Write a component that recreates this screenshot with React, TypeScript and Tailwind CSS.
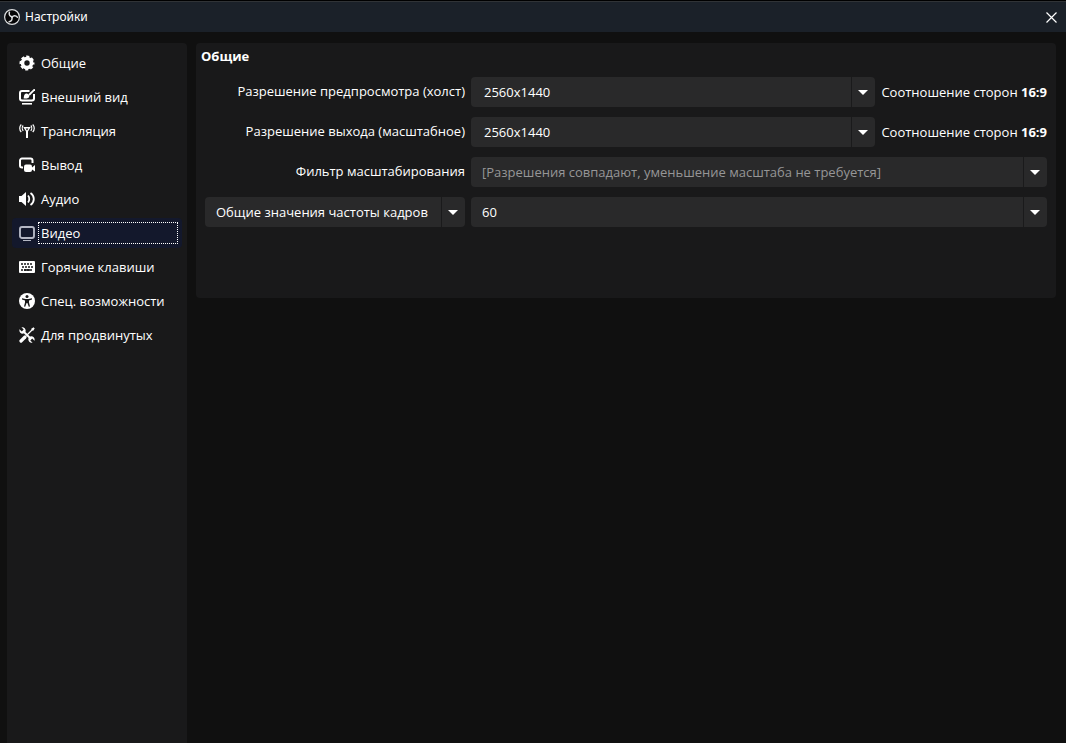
import React, { useState } from 'react';

const iconClass = 'h-4 w-4 shrink-0';

const ObsLogo = () => (
  <svg viewBox="0 0 16 16" className={iconClass} fill="none" stroke="#dcdee0">
    <circle cx="8" cy="8" r="7.400" fill="#050506" strokeWidth="1.200" />
    <g strokeWidth="1.500" strokeLinecap="round">
      <path d="M8.200 7.800C6 7.600 4.600 5.800 5.400 3.200" />
      <path d="M8.200 7.800C6 7.600 4.600 5.800 5.400 3.200" transform="rotate(120 8 8)" />
      <path d="M8.200 7.800C6 7.600 4.600 5.800 5.400 3.200" transform="rotate(240 8 8)" />
    </g>
  </svg>
);

const GearIcon = () => (
  <svg viewBox="0 0 16 16" className={iconClass} fill="none" stroke="currentColor">
    <circle cx="8" cy="8" r="4.500" strokeWidth="3.600" />
    <circle cx="8" cy="8" r="6.500" strokeWidth="2" strokeDasharray="3.105 2" strokeDashoffset="1.550" />
  </svg>
);

const AppearanceIcon = () => (
  <svg viewBox="0 0 16 16" className={iconClass} fill="none" stroke="currentColor" strokeWidth="2">
    <path d="M10.500 2H3a2 2 0 0 0-2 2v5.500a2 2 0 0 0 2 2h10a2 2 0 0 0 2-2V5" />
    <path d="M15.800.300L10 6" strokeWidth="1.800" />
    <path d="M4.500 9.300C5 8.800 4.700 7.500 5.200 6.200 6 4.400 8 4 9.300 5.200c1.500 1.300 1.200 3.200-.3 3.900-1.300.7-3.300.6-4.500.2z" fill="currentColor" stroke="none" />
    <path d="M3 14.800h10" strokeWidth="1.600" />
  </svg>
);

const StreamIcon = () => (
  <svg viewBox="0 0 16 16" className={iconClass} fill="none" stroke="currentColor" strokeWidth="1.200">
    <path d="M4.300 4h7.400L9 8.600V15H7V8.600z" fill="currentColor" stroke="none" />
    <path d="M6.600 5.400h2.800L8 7.500z" fill="#19191a" stroke="none" />
    <path d="M2.300 1.500C.200 3.500.200 7 2.300 9M13.700 1.500c2.100 2 2.100 5.500 0 7.500" />
    <path d="M4.200 2.500C3 3.800 3 6.300 4.200 7.800M11.800 2.500c1.200 1.300 1.200 3.800 0 5.300" />
  </svg>
);

const OutputIcon = () => (
  <svg viewBox="0 0 16 16" className={iconClass} fill="currentColor">
    <path
      d="M4 10.500H3a2 2 0 0 1-2-2V3.500a2 2 0 0 1 2-2h8.500a2 2 0 0 1 2 2V6"
      fill="none"
      stroke="currentColor"
      strokeWidth="2"
    />
    <rect x="5" y="7.500" width="8" height="7.500" rx="2" />
    <path d="M13 10.500L16 8v6.500l-3-2z" />
  </svg>
);

const AudioIcon = () => (
  <svg viewBox="0 0 16 16" className={iconClass} fill="none" stroke="currentColor" strokeWidth="1.800">
    <path d="M0 5h2.500L7 1v14l-4.500-4H0z" fill="currentColor" stroke="none" />
    <path d="M9 4.500c1.700 1.800 1.700 5.200 0 7M11.500 2c4.400 3 4.400 9 0 12" />
  </svg>
);

const VideoIcon = () => (
  <svg viewBox="0 0 16 16" className="h-4 w-4 shrink-0 text-[#b4b7c4]" fill="none" stroke="currentColor">
    <rect x="1" y="2" width="14" height="11" rx="2" strokeWidth="1.900" />
    <path d="M4 15.500h8" />
  </svg>
);

const KeyboardIcon = () => (
  <svg viewBox="0 0 16 16" className={iconClass} fill="none" stroke="#19191a" strokeWidth="1.600">
    <rect y="2" width="16" height="12" rx="1" fill="currentColor" stroke="none" />
    <path d="M2 5h12M3 8h11M2 11h12" strokeDasharray="2 1" />
    <path d="M5 11h6" />
  </svg>
);

const AccessibilityIcon = () => (
  <svg viewBox="0 0 16 16" className={iconClass}>
    <circle cx="8" cy="8" r="8" fill="currentColor" />
    <circle cx="8" cy="3.500" r="1.500" fill="#19191a" />
    <path
      d="M3 5.300l3.500.700h3L13 5.300v1.200l-3 .9v2.100l1 4-1.200.3L8.400 10h-.8l-1.400 3.800L5 13.500l1-4V7.400L3 6.500z"
      fill="#19191a"
    />
  </svg>
);

const ToolsIcon = () => (
  <svg viewBox="0 0 16 16" className={iconClass} fill="none" stroke="currentColor">
    <path d="M4.500 4.500l7.500 7.500" strokeWidth="2" />
    <path
      d="M.5 2.200l2.300 2.300L4.700 2.600l-2.300-2.300C5-.4 7.300 2 6.600 4.600L4.600 6.600C2 7.300-.2 5 .5 2.200zM15.500 13.800l-2.300-2.300-1.900 1.900 2.300 2.300c-2.600.7-4.900-1.700-4.200-4.300l2-2c2.600-.7 4.800 1.600 4.100 4.400z"
      fill="currentColor"
      stroke="none"
    />
    <path d="M7.500 8.500L13.500 2.500" strokeWidth="1.300" />
    <path d="M12 2l2.500-1.700 1.200 1.200L14 4z" fill="currentColor" stroke="none" />
    <path d="M2 14l4-4" strokeWidth="3.200" strokeLinecap="round" />
  </svg>
);

const sections = [
  { name: 'Общие', icon: <GearIcon /> },
  { name: 'Внешний вид', icon: <AppearanceIcon /> },
  { name: 'Трансляция', icon: <StreamIcon /> },
  { name: 'Вывод', icon: <OutputIcon /> },
  { name: 'Аудио', icon: <AudioIcon /> },
  { name: 'Видео', icon: <VideoIcon /> },
  { name: 'Горячие клавиши', icon: <KeyboardIcon /> },
  { name: 'Спец. возможности', icon: <AccessibilityIcon /> },
  { name: 'Для продвинутых', icon: <ToolsIcon /> }
];

const Arrow = () => (
  <svg viewBox="0 0 10 5" className="h-[5px] w-[10px]" fill="currentColor">
    <path d="M0 0h10L5 5z" />
  </svg>
);

interface SelectProps {
  id?: string;
  label?: string;
  options: string[];
  disabled?: boolean;
}

const Select: React.FC<SelectProps> = ({ id, label, options, disabled }) => (
  <div className="relative h-[30px] rounded bg-[#29292a]">
    <select
      id={id}
      aria-label={label}
      disabled={disabled}
      className="h-full w-full appearance-none rounded bg-transparent pr-7 pl-[11px] outline-none disabled:text-[#969697] disabled:opacity-100"
    >
      {options.map((option) => (
        <option key={option}>{option}</option>
      ))}
    </select>
    <span className="pointer-events-none absolute inset-y-0 right-0 flex w-6 items-center justify-center border-l border-[#1a1a1b] pr-px">
      <Arrow />
    </span>
  </div>
);

const ComboBox: React.FC<{ id: string; value: string }> = ({ id, value }) => (
  <div className="flex h-[30px] rounded bg-[#29292a]">
    <input
      id={id}
      type="text"
      defaultValue={value}
      className="min-w-0 flex-1 bg-transparent pl-[13px] outline-none"
    />
    <button
      type="button"
      aria-label="Показать список"
      className="flex w-6 items-center justify-center border-l border-[#1a1a1b] pr-px"
    >
      <Arrow />
    </button>
  </div>
);

const AspectRatio = () => (
  <p className="whitespace-nowrap">
    Соотношение сторон <b>16:9</b>
  </p>
);

const App: React.FC = () => {
  const [active, setActive] = useState('Видео');

  return (
    <div className="flex min-h-screen flex-col bg-[#101010] font-['Open_Sans',sans-serif] text-[13px] leading-5 text-white">
      {/* Title bar */}
      <div className="border-t border-black">
        <header className="flex h-[31px] items-center gap-[5px] border-t border-[#303336] bg-[#1b2129] pr-2 pl-1">
          <ObsLogo />
          <h1 className="flex-1 font-['Noto_Sans',sans-serif] text-xs">Настройки</h1>
          <button type="button" aria-label="Закрыть" className="p-px">
            <svg viewBox="0 0 11 11" className="h-[11px] w-[11px]" fill="none" stroke="currentColor" strokeWidth="1.200">
              <path d="M.5.5l10 10M10.500.5l-10 10" />
            </svg>
          </button>
        </header>
      </div>

      <div className="flex flex-1 gap-[9px] pt-[11px] pr-[10px] pl-[7px]">
        {/* Sections */}
        <nav className="flex w-[180px] shrink-0 flex-col gap-1 rounded-t bg-[#19191a] p-[5px]">
          {sections.map((section) => (
            <button
              key={section.name}
              type="button"
              onClick={() => setActive(section.name)}
              className={`flex h-[30px] items-center gap-[3px] rounded pr-1 pl-[7px] text-left ${
                active === section.name ? 'bg-[#13182c]' : ''
              }`}
            >
              {section.icon}
              <span
                className={`flex-1 border border-dotted pl-[2px] whitespace-nowrap ${
                  active === section.name ? 'border-white' : 'border-transparent'
                }`}
              >
                {section.name}
              </span>
            </button>
          ))}
        </nav>

        {/* Video settings */}
        <main className="min-w-0 flex-1">
          <section className="rounded bg-[#19191a] pb-[71px]">
            <h2 className="px-[5px] pt-[3px] pb-[11px] font-bold">Общие</h2>
            <div className="grid grid-cols-[260px_1fr_auto] items-center gap-x-[6px] gap-y-[10px] px-[9px]">
              <label htmlFor="base" className="pb-[2px] text-right">
                Разрешение предпросмотра (холст)
              </label>
              <ComboBox id="base" value="2560x1440" />
              <AspectRatio />

              <label htmlFor="output" className="pb-[2px] text-right">
                Разрешение выхода (масштабное)
              </label>
              <ComboBox id="output" value="2560x1440" />
              <AspectRatio />

              <label htmlFor="filter" className="pb-[2px] text-right">
                Фильтр масштабирования
              </label>
              <div className="col-span-2">
                <Select
                  id="filter"
                  options={['[Разрешения совпадают, уменьшение масштаба не требуется]']}
                  disabled
                />
              </div>

              <Select
                label="Тип частоты кадров"
                options={['Общие значения частоты кадров']}
              />
              <div className="col-span-2">
                <Select label="Частота кадров" options={['60', '30', '24']} />
              </div>
            </div>
          </section>
        </main>
      </div>
    </div>
  );
};

export default App;
